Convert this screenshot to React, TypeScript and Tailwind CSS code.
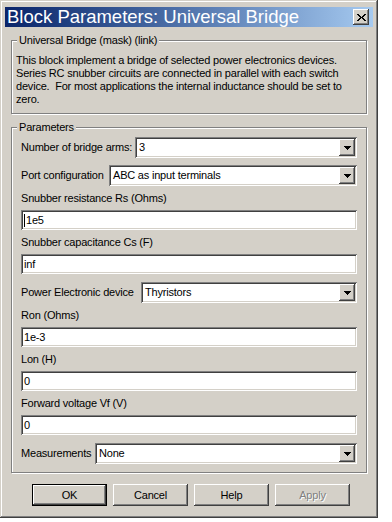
import React from "react";

const sunken =
  "shadow-[inset_1px_1px_#808080,inset_-1px_-1px_#ffffff,inset_2px_2px_#404040,inset_-2px_-2px_#d4d0c8]";
const raised =
  "shadow-[inset_-1px_-1px_#404040,inset_1px_1px_#ffffff,inset_-2px_-2px_#808080,inset_2px_2px_#d4d0c8]";

function Arrow() {
  return (
    <svg width="7" height="4" viewBox="0 0 7 4" shapeRendering="crispEdges">
      <path d="M0 0h7v1H0z M1 1h5v1H1z M2 2h3v1H2z M3 3h1v1H3z" fill="#000" />
    </svg>
  );
}

function CloseGlyph() {
  return (
    <svg width="9" height="7" viewBox="0 0 9 7" shapeRendering="crispEdges">
      <path
        d="M0 0h2v1H0z M7 0h2v1H7z M1 1h2v1H1z M6 1h2v1H6z M2 2h2v1H2z M5 2h2v1H5z M3 3h3v1H3z M2 4h2v1H2z M5 4h2v1H5z M1 5h2v1H1z M6 5h2v1H6z M0 6h2v1H0z M7 6h2v1H7z"
        fill="#000"
      />
    </svg>
  );
}

function GroupBox({
  title,
  className,
  children,
}: {
  title: string;
  className: string;
  children: React.ReactNode;
}) {
  return (
    <div
      className={`relative mx-[6px] border border-[#808080] shadow-[inset_1px_1px_#ffffff,1px_1px_#ffffff] ${className}`}
    >
      <span className="absolute left-[5px] top-[-7px] bg-[#d4d0c8] px-[2px] leading-[13px]">
        {title}
      </span>
      {children}
    </div>
  );
}

function SelectRow({ label, value, labelW }: { label: string; value: string; labelW: string }) {
  return (
    <div className="flex items-center">
      <span className={`${labelW} shrink-0 whitespace-nowrap`}>{label}</span>
      <div className={`flex-1 h-[21px] bg-white flex items-center pl-[4px] pr-[2px] ${sunken}`}>
        <span className="flex-1">{value}</span>
        <div className={`w-[16px] h-[17px] bg-[#d4d0c8] flex items-center justify-center ${raised}`}>
          <Arrow />
        </div>
      </div>
    </div>
  );
}

function InputRow({ label, value, caret }: { label: string; value: string; caret?: boolean }) {
  return (
    <div className="flex flex-col mt-[6px]">
      <span className="h-[13px] leading-[13px]">{label}</span>
      <div className={`mt-[5px] h-[20px] bg-white flex items-center pl-[3px] ${sunken}`}>
        {caret && <span className="w-px h-[13px] bg-black mr-[1px]" />}
        <span>{value}</span>
      </div>
    </div>
  );
}

function Button({ label, isDefault, disabled }: { label: string; isDefault?: boolean; disabled?: boolean }) {
  return (
    <div
      className={`w-[75px] h-[22px] flex items-center justify-center bg-[#d4d0c8] ${
        isDefault
          ? "shadow-[inset_0_0_0_1px_#000000,inset_-2px_-2px_#404040,inset_2px_2px_#ffffff,inset_-3px_-3px_#808080]"
          : raised
      } ${disabled ? "text-[#808080] [text-shadow:1px_1px_#ffffff]" : ""}`}
    >
      {label}
    </div>
  );
}

export default function App() {
  return (
    <div className="w-[392px] h-[522px] bg-white font-['Liberation_Sans',Arial,sans-serif] text-[11px] tracking-[-0.2px] text-black">
      <div
        className={`w-[378px] h-[518px] bg-[#d4d0c8] flex flex-col pt-[7px] px-[5px] shadow-[inset_-1px_-1px_#404040,inset_1px_1px_#d4d0c8,inset_-2px_-2px_#808080,inset_2px_2px_#ffffff]`}
      >
        {/* title bar */}
        <div className="h-[20px] flex items-center bg-gradient-to-r from-[#0a246a] to-[#a6caf0] pl-[2px] pr-[4px]">
          <span className="text-white text-[18.5px] tracking-normal leading-none">
            Block Parameters: Universal Bridge
          </span>
          <div className={`ml-auto w-[16px] h-[16px] bg-[#d4d0c8] flex items-center justify-center ${raised}`}>
            <CloseGlyph />
          </div>
        </div>

        <GroupBox title="Universal Bridge (mask) (link)" className="mt-[13px] pt-[13px] pb-[7px] pl-[4px] pr-[4px]">
          <p className="leading-[13px]">
            This block implement a bridge of selected power electronics devices.
            <br />
            Series RC snubber circuits are connected in parallel with each switch
            <br />
            device.&nbsp; For most applications the internal inductance should be set to
            <br />
            zero.
          </p>
        </GroupBox>

        <GroupBox title="Parameters" className="mt-[13px] pt-[9px] pb-[8px] px-[9px]">
          <div className="flex flex-col">
            <SelectRow label="Number of bridge arms:" value="3" labelW="w-[114px]" />
            <div className="mt-[7px]">
              <SelectRow label="Port configuration" value="ABC as input terminals" labelW="w-[88px]" />
            </div>
            <InputRow label="Snubber resistance Rs (Ohms)" value="1e5" caret />
            <InputRow label="Snubber capacitance Cs (F)" value="inf" />
            <div className="mt-[8px]">
              <SelectRow label="Power Electronic device" value="Thyristors" labelW="w-[120px]" />
            </div>
            <InputRow label="Ron (Ohms)" value="1e-3" />
            <InputRow label="Lon (H)" value="0" />
            <InputRow label="Forward voltage Vf (V)" value="0" />
            <div className="mt-[8px]">
              <SelectRow label="Measurements" value="None" labelW="w-[74px]" />
            </div>
          </div>
        </GroupBox>

        <div className="mt-[11px] pl-[27px] flex gap-[6px]">
          <Button label="OK" isDefault />
          <Button label="Cancel" />
          <Button label="Help" />
          <Button label="Apply" disabled />
        </div>
      </div>
    </div>
  );
}
